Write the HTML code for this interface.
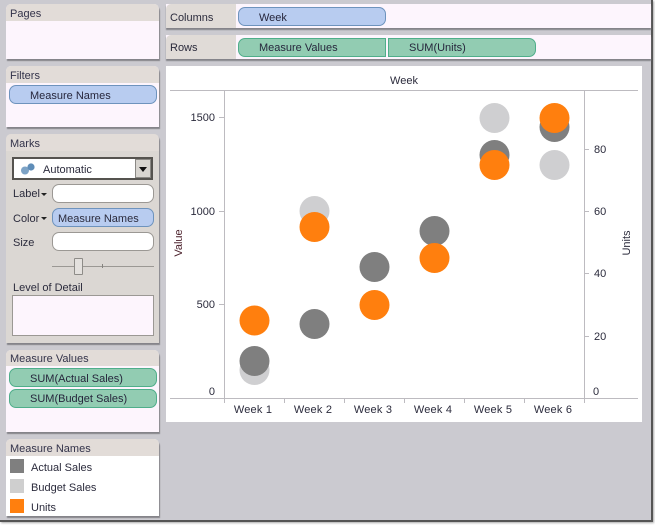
<!DOCTYPE html>
<html><head><meta charset="utf-8"><style>
html,body{margin:0;padding:0}
body{width:655px;height:525px;overflow:hidden;background:#fff;position:relative;font:11px/16px "Liberation Sans",sans-serif;color:#2b2b3c}
div{position:absolute;box-sizing:border-box;white-space:nowrap}
.bg{left:0;top:0;width:653px;height:522px;background:#cbcad0;border-right:2px solid #555;border-bottom:2px solid #555;box-shadow:1px 1px 2px #aaa}
.panel{left:6px;width:153px;background:#fdf5fd;box-shadow:1px 2px 1px #85848a;border-radius:5px 5px 0 0}
.head{left:0;top:0;width:153px;height:17px;background:#e2dcd8;border-radius:5px 5px 0 0;padding:2px 0 0 4px;color:#33334a}
.pill{height:19px;border-radius:7px;padding:2px 0 0 20px;color:#26263c}
.b{background:#b8ccf0;border:1px solid #6e93bd}
.g{background:#92ccb2;border:1px solid #4fae8a}
.shelf{left:166px;width:485px;height:24px;background:#fdf5fd;box-shadow:0 2px 1px #85848a}
.shead{left:0;top:0;width:70px;height:24px;background:#e0dbd7;border-radius:5px 0 0 0;padding:6px 0 0 4px}
.in{left:52px;width:102px;height:19px;background:#fff;border:1px solid #9b9894;border-radius:7px}
.lbl{left:13px}
.sw{left:10px;width:14px;height:14px}
.lt{left:31px}
</style></head><body>
<div class="bg"></div>

<div class="panel" style="top:4px;height:55px"><div class="head">Pages</div></div>
<div class="panel" style="top:66px;height:61px"><div class="head">Filters</div></div>
<div class="pill b" style="left:9px;top:85px;width:148px">Measure Names</div>

<div class="panel" style="top:134px;height:209px;background:#dbd7d3"><div class="head">Marks</div></div>
<div style="left:12px;top:157px;width:141px;height:23px;background:#fff;border:2px solid #55534f;padding:3px 0 0 29px">Automatic
  <div style="left:121px;top:0;width:16px;height:19px;background:#d8d5d0;border:1px solid #8a8884"></div>
  <div style="left:125px;top:8px;border:4px solid transparent;border-top:5px solid #111;border-bottom:0"></div>
</div>
<svg style="position:absolute;left:20px;top:162px" width="18" height="14"><circle cx="5" cy="8.5" r="4" fill="#7da3c6"/><circle cx="11" cy="5" r="3.6" fill="#5f8db8"/></svg>
<div class="lbl" style="top:186px">Label</div><div style="left:41px;top:193px;border:3px solid transparent;border-top:3px solid #222;border-bottom:0"></div>
<div class="in" style="top:184px"></div>
<div class="lbl" style="top:211px">Color</div><div style="left:41px;top:217px;border:3px solid transparent;border-top:3px solid #222;border-bottom:0"></div>
<div class="in b" style="top:208px;padding:2px 0 0 5px;border-color:#6e93bd;background:#b8ccf0">Measure Names</div>
<div class="lbl" style="top:235px">Size</div>
<div class="in" style="top:232px"></div>
<div style="left:52px;top:266px;width:102px;height:1px;background:#9b9894"></div>
<div style="left:102px;top:264px;width:1px;height:4px;background:#85837f"></div>
<div style="left:74px;top:258px;width:9px;height:17px;background:#e4e1de;border:1px solid #8e8c88;border-radius:1px"></div>
<div class="lbl" style="top:280px">Level of Detail</div>
<div style="left:12px;top:295px;width:142px;height:41px;background:#fdf5fd;border:1px solid #9b9894"></div>

<div class="panel" style="top:350px;height:82px"><div class="head" style="height:16px;padding-top:1px">Measure Values</div></div>
<div class="pill g" style="left:9px;top:368px;width:148px">SUM(Actual Sales)</div>
<div class="pill g" style="left:9px;top:389px;width:148px;padding-top:1px">SUM(Budget Sales)</div>

<div class="panel" style="top:439px;height:77px;background:#fff"><div class="head">Measure Names</div></div>
<div class="sw" style="top:459px;background:#7f7f7f"></div><div class="lt" style="top:460px">Actual Sales</div>
<div class="sw" style="top:479px;background:#cfcfcf"></div><div class="lt" style="top:480px">Budget Sales</div>
<div class="sw" style="top:499px;background:#ff7f0e"></div><div class="lt" style="top:500px">Units</div>

<div class="shelf" style="top:4px"><div class="shead">Columns</div></div>
<div class="pill b" style="left:238px;top:7px;width:148px">Week</div>
<div class="shelf" style="top:35px"><div class="shead" style="padding-top:5px">Rows</div></div>
<div class="pill g" style="left:238px;top:38px;width:148px;border-radius:7px 0 0 7px;padding-top:1px">Measure Values</div>
<div class="pill g" style="left:388px;top:38px;width:148px;border-radius:0 7px 7px 0;padding-top:1px">SUM(Units)</div>

<svg style="position:absolute;left:166px;top:66px" width="476" height="356" viewBox="166 66 476 356" font-family="Liberation Sans, sans-serif" font-size="11" fill="#2b2b3c">
<rect x="166" y="66" width="476" height="356" fill="#fff"/>
<g stroke="#bdbbc0" fill="none" shape-rendering="crispEdges">
<path d="M170 90.5H638M170 398.5H638M224.5 90V403M584.5 90V403M284.5 398V403M344.5 398V403M404.5 398V403M464.5 398V403M524.5 398V403M219 117.5H224M219 211.5H224M219 304.5H224M584 149.5H589M584 211.5H589M584 273.5H589M584 336.5H589"/>
</g>
<text x="404" y="84" text-anchor="middle">Week</text>
<g text-anchor="end">
<text x="215" y="121">1500</text><text x="215" y="215">1000</text><text x="215" y="308">500</text><text x="215" y="395">0</text>
</g>
<g>
<text x="594" y="153">80</text><text x="594" y="215">60</text><text x="594" y="277">40</text><text x="594" y="340">20</text><text x="593" y="395">0</text>
</g>
<text transform="translate(182 243) rotate(-90)" text-anchor="middle" fill="#4a1f2a">Value</text>
<text transform="translate(630 243) rotate(-90)" text-anchor="middle">Units</text>
<g text-anchor="middle" letter-spacing=".2">
<text x="253" y="413">Week 1</text><text x="313" y="413">Week 2</text><text x="373" y="413">Week 3</text><text x="433" y="413">Week 4</text><text x="493" y="413">Week 5</text><text x="553" y="413">Week 6</text>
</g>
<g fill="#cfcfd1">
<circle cx="254.5" cy="370" r="15"/><circle cx="314.5" cy="211" r="15"/><circle cx="494.5" cy="118" r="15"/><circle cx="554.5" cy="165" r="15"/>
</g>
<g fill="#7f7f7f">
<circle cx="254.5" cy="361" r="15"/><circle cx="314.5" cy="324" r="15"/><circle cx="374.5" cy="267" r="15"/><circle cx="434.5" cy="231" r="15"/><circle cx="494.5" cy="155" r="15"/><circle cx="554.5" cy="127" r="15"/>
</g>
<g fill="#ff7f0e">
<circle cx="254.5" cy="320.5" r="15"/><circle cx="314.5" cy="227" r="15"/><circle cx="374.5" cy="305" r="15"/><circle cx="434.5" cy="258" r="15"/><circle cx="494.5" cy="165" r="15"/><circle cx="554.5" cy="118" r="15"/>
</g>
</svg>
</body></html>
